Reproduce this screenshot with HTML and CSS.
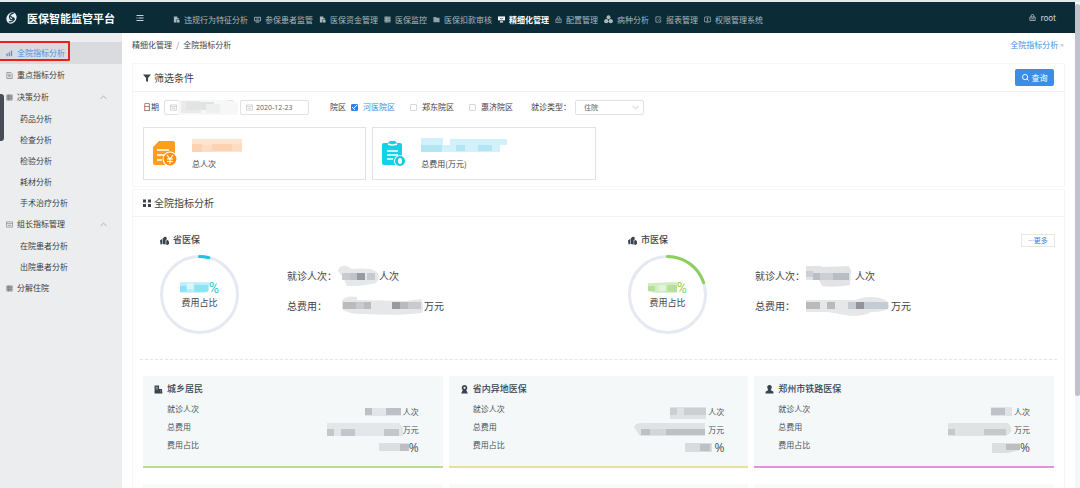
FILE: index.html
```html
<!DOCTYPE html>
<html lang="zh-CN">
<head>
<meta charset="utf-8">
<title>医保智能监管平台</title>
<link rel="stylesheet" href="styles.css">
</head>
<body>
<svg class="defs" aria-hidden="true">
  <symbol id="doc" viewBox="0 0 16 16"><path d="M2 1h8v4h4v3H8v7H2z"/><path d="M9 9h6v6H9z"/></symbol>
  <symbol id="monitor" viewBox="0 0 16 16"><path fill="none" stroke="currentColor" stroke-width="2" d="M1 3h14v8H1zM4 14h8M5 7h6"/></symbol>
  <symbol id="table" viewBox="0 0 16 16"><path d="M1 1h14v14H1z" opacity=".65"/><path fill="none" stroke="currentColor" stroke-width="1.5" d="M1 5h14M1 10h14M6 1v14"/></symbol>
  <symbol id="folder" viewBox="0 0 16 16"><path d="M1 2h6l2 2h6v10H1z" opacity=".85"/></symbol>
  <symbol id="heart" viewBox="0 0 16 16"><path d="M0 1h16v9H0z"/><path d="M5 12h6l1 3H4z"/><path d="M4 5l3 2 5-2" fill="none" stroke="#0b2b36" stroke-width="1.5"/></symbol>
  <symbol id="lock" viewBox="0 0 16 16"><path fill="none" stroke="currentColor" stroke-width="1.6" d="M2 7h12v8H2zM5 7V4a3 3 0 0 1 6 0v3M5 11h6"/></symbol>
  <symbol id="cubes" viewBox="0 0 16 16"><circle cx="8" cy="4" r="3.5"/><circle cx="4" cy="11" r="3.8"/><circle cx="12" cy="11" r="3.8"/></symbol>
  <symbol id="edit" viewBox="0 0 16 16"><path fill="none" stroke="currentColor" stroke-width="1.6" d="M13 8v6H2V2h11M6 8l2 2 6-7"/></symbol>
  <symbol id="badge" viewBox="0 0 16 16"><path fill="none" stroke="currentColor" stroke-width="1.6" d="M1 3q7-3 14 0v10q-7 3-14 0zM8 4v7M5 12h6M6 6h4"/></symbol>
  <symbol id="bars" viewBox="0 0 16 16"><path d="M1 8h3v6H1zM6 5h3v9H6zM11 1h3v13h-3z"/></symbol>
  <symbol id="note" viewBox="0 0 16 16"><path fill="none" stroke="currentColor" stroke-width="1.6" d="M2 1h9l3 3v11H2zM5 5h5M5 8h6M5 11h6"/></symbol>
  <symbol id="calendar" viewBox="0 0 16 16"><path fill="none" stroke="currentColor" stroke-width="1.4" d="M1 2h14v12H1zM1 6h14M4 10h8"/></symbol>
  <symbol id="up" viewBox="0 0 16 16"><path fill="none" stroke="currentColor" stroke-width="1.8" d="M1 11l7-6 7 6"/></symbol>
  <symbol id="down" viewBox="0 0 16 16"><path fill="none" stroke="currentColor" stroke-width="1.8" d="M1 5l7 6 7-6"/></symbol>
  <symbol id="hands" viewBox="0 0 16 16"><path d="M0 8l4-3v9l-3 1zM5 4l4-3 3 2v3l-2 1v8l-5-1z"/><path d="M11 8l3-1 2 3v4l-3 2-2-1z"/></symbol>
  <symbol id="building" viewBox="0 0 16 16"><path d="M1 1h8v6h5l1 8H1z"/><path d="M11 10h1M11 12h1M3 4h4M3 7h4" stroke="#f4f8f9"/></symbol>
  <symbol id="seal" viewBox="0 0 16 16"><path fill-rule="evenodd" d="M8 0a5 5 0 0 1 3 9l3 6H2l3-6A5 5 0 0 1 8 0zM8 3a2 2 0 1 0 0 4 2 2 0 0 0 0-4z"/></symbol>
  <symbol id="person" viewBox="0 0 16 16"><path d="M8 0c3 0 4 2 4 4s-1 4-2 5l5 3v3H1v-3l5-3C5 8 4 6 4 4s1-4 4-4z"/></symbol>
</svg>

<div class="app">
  <header class="topbar">
    <div class="brand">
      <svg class="logo" viewBox="0 0 24 24"><ellipse cx="12" cy="12" rx="9" ry="11" transform="rotate(28 12 12)" fill="#e9f0f2"/><path d="M16 3C9 4 7 9 9 13s6 2 7-2M7 19c5 1 9-2 11-6M10 8l6 6" fill="none" stroke="#0b2b36" stroke-width="2"/></svg>
      <h1 class="brand-name">医保智能监管平台</h1>
    </div>
    <button class="fold" aria-label="折叠菜单"><svg viewBox="0 0 16 16"><path d="M1 3h14M5 8h10M1 13h14M1 8h2" stroke="currentColor" stroke-width="2"/></svg></button>
    <nav class="topnav">
      <a class="topnav-item" href="#"><svg class="ico"><use href="#doc"/></svg>违规行为特征分析</a>
      <a class="topnav-item" href="#"><svg class="ico"><use href="#monitor"/></svg>参保患者监管</a>
      <a class="topnav-item" href="#"><svg class="ico"><use href="#doc"/></svg>医保资金管理</a>
      <a class="topnav-item" href="#"><svg class="ico"><use href="#table"/></svg>医保监控</a>
      <a class="topnav-item" href="#"><svg class="ico"><use href="#folder"/></svg>医保扣款审核</a>
      <a class="topnav-item is-active" href="#"><svg class="ico"><use href="#heart"/></svg>精细化管理</a>
      <a class="topnav-item" href="#"><svg class="ico"><use href="#lock"/></svg>配置管理</a>
      <a class="topnav-item" href="#"><svg class="ico ico-wide"><use href="#cubes"/></svg>病种分析</a>
      <a class="topnav-item" href="#"><svg class="ico"><use href="#edit"/></svg>报表管理</a>
      <a class="topnav-item" href="#"><svg class="ico"><use href="#badge"/></svg>权限管理系统</a>
    </nav>
    <button class="user"><svg class="ico"><use href="#lock"/></svg>root</button>
  </header>

  <aside class="sidebar">
    <nav class="menu">
      <a class="menu-item is-active" href="#"><svg class="ico"><use href="#bars"/></svg>全院指标分析</a>
      <a class="menu-item" href="#"><svg class="ico"><use href="#note"/></svg>重点指标分析</a>
      <a class="menu-item" href="#"><svg class="ico"><use href="#table"/></svg>决策分析<svg class="ico menu-arrow"><use href="#up"/></svg></a>
      <a class="menu-sub" href="#">药品分析</a>
      <a class="menu-sub" href="#">检查分析</a>
      <a class="menu-sub" href="#">检验分析</a>
      <a class="menu-sub" href="#">耗材分析</a>
      <a class="menu-sub" href="#">手术治疗分析</a>
      <a class="menu-item" href="#"><svg class="ico"><use href="#calendar"/></svg>组长指标管理<svg class="ico menu-arrow"><use href="#up"/></svg></a>
      <a class="menu-sub" href="#">在院患者分析</a>
      <a class="menu-sub" href="#">出院患者分析</a>
      <a class="menu-item" href="#"><svg class="ico"><use href="#table"/></svg>分解住院</a>
    </nav>
    <div class="highlight"></div>
    <div class="drawer-tab"></div>
  </aside>

  <main class="main">
    <div class="crumbs">
      <span>精细化管理</span><span class="crumb-sep">/</span><span>全院指标分析</span>
      <a class="page-tab" href="#">全院指标分析 <span class="tab-close">×</span></a>
    </div>

    <section class="panel">
      <div class="panel-head">
        <svg class="head-ico" viewBox="0 0 16 16"><path d="M0 1h16l-6 7v8l-4-2V8z"/></svg>
        <h2 class="panel-title">筛选条件</h2>
        <button class="query"><svg class="ico" viewBox="0 0 16 16"><path d="M7 1a6 6 0 1 0 0 12A6 6 0 0 0 7 1zM11 11l4 4" fill="none" stroke="currentColor" stroke-width="2"/></svg>查询</button>
      </div>
      <div class="filter-body">
        <form class="filters">
          <label for="from">日期</label>
          <span class="date-box date-from"><svg class="ico field-ico"><use href="#calendar"/></svg><input class="date" id="from" type="text" value="">
            <svg class="mosaic date-mask" viewBox="0 0 60 18"><path fill="#f7f7f7" d="M0 2h48l12 3v12H0z"/><path fill="#e9eaea" d="M3 3h20v12H3z"/><path fill="#e2e4e4" d="M8 4h28v8H8z"/><path fill="#eeefef" d="M28 6h14v9H28z"/></svg>
          </span>
          <span class="dash">-</span>
          <span class="date-box"><svg class="ico field-ico"><use href="#calendar"/></svg><input class="date" type="text" value="2020-12-23" aria-label="结束日期"></span>
          <span class="filter-label">院区</span>
          <label class="check is-on"><input type="checkbox" checked>河医院区</label>
          <label class="check"><input type="checkbox">郑东院区</label>
          <label class="check"><input type="checkbox">惠济院区</label>
          <label class="type-label" for="type">就诊类型：</label>
          <span class="select-box"><select class="select" id="type"><option>住院</option></select><svg class="ico select-arrow"><use href="#down"/></svg></span>
        </form>
        <div class="stats">
          <div class="stat">
            <svg class="stat-ico" viewBox="0 0 24 26"><path fill="#ff9d1c" d="M6 0h14a2 2 0 0 1 2 2v22H2a2 2 0 0 1-2-2V6z"/><path d="M4 9h12M4 14h8M4 19h5" stroke="#fff" stroke-width="1.4"/><circle cx="17" cy="18" r="7.5" fill="#fff"/><circle cx="17" cy="18" r="6.4" fill="#ff8f10"/><path d="M14 14l3 4 3-4M17 18v5M14 18h6M14 20.500h6" fill="none" stroke="#fff" stroke-width="1.200"/></svg>
            <div class="stat-text">
              <svg class="mosaic stat-mask" viewBox="0 0 90 14"><path fill="#fde5d2" d="M0 1h50v13H0z"/><path fill="#fbd3b2" d="M0 6h10v8H0zM20 6h20v7H20z"/><path fill="#fddcc2" d="M10 7h10v7H10zM40 6h10v7H40z"/></svg>
              <span>总人次</span>
            </div>
          </div>
          <div class="stat">
            <svg class="stat-ico" viewBox="0 0 24 26"><path fill="#13d2e3" d="M2 2h4l2-2h5l2 2h3a2 2 0 0 1 2 2v20H2a2 2 0 0 1-2-2V4a2 2 0 0 1 2-2z"/><path d="M6 3q4 2 9 0M5 10h11M5 14h11M5 18h6" fill="none" stroke="#fff" stroke-width="1.400"/><circle cx="18" cy="20" r="6" fill="#fff"/><circle cx="18" cy="20" r="5" fill="#13c8e3"/><ellipse cx="18" cy="20" rx="2" ry="3" fill="#fff"/></svg>
            <div class="stat-text">
              <svg class="mosaic stat-mask" viewBox="0 0 90 14"><path fill="#d3f1fb" d="M0 0h22v7h7V1h57v6h-7v7H0z"/><path fill="#b4e5f5" d="M0 7h21v7H0zM35 7h9v6h-9zM57 7h14v6H57z"/></svg>
              <span>总费用(万元)</span>
            </div>
          </div>
        </div>
      </div>
    </section>

    <section class="panel panel-grow">
      <div class="panel-head panel-head-low">
        <svg class="head-ico" viewBox="0 0 16 16"><path d="M0 1h6v6H0zM10 1h6v6h-6zM0 10h6v6H0zM10 10h6v6h-6z"/></svg>
        <h2 class="panel-title">全院指标分析</h2>
      </div>
      <div class="overview">
        <article class="insurer">
          <h3 class="sub-title"><svg class="ico ico-wide"><use href="#hands"/></svg>省医保</h3>
          <div class="insurer-row">
            <div class="ring">
              <svg class="ring-chart" viewBox="0 0 79 79"><circle class="ring-track" cx="39.500" cy="39.500" r="38"/><circle class="ring-value ring-cyan" cx="39.500" cy="39.500" r="38" pathLength="100" stroke-dasharray="4 96" transform="rotate(-90 39.5 39.5)"/></svg>
              <div class="ring-text">
                <div class="ring-number cyan"><svg class="mosaic ring-mask" viewBox="0 0 30 12"><path fill="#b9effa" d="M0 0h30v8l-4 3H0z"/><path fill="#8be3f4" d="M0 4h7v6H0zM15 3h14v7H15z"/><path fill="#dcf6fb" d="M7 1h7v6H7z"/></svg>%</div>
                <div class="ring-label">费用占比</div>
              </div>
            </div>
            <dl class="figures">
              <div class="figure"><dt>就诊人次：</dt><dd><svg class="mosaic" width="41" height="22" viewBox="0 0 41 22"><path fill="#e6e7e8" d="M0 6q1-6 9-5l5 3q10-1 18 0 9 3 9 7-1 8-7 8l-14 2H9l-3-7z"/><path fill="#c8cad0" d="M4 8h8v7H4zM29 8h8v7h-8z"/><path fill="#989aa1" d="M19 8h8v7h-8z"/><path fill="#bfc3ca" d="M12 8h7v7h-7z"/></svg>人次</dd></div>
              <div class="figure"><dt>总费用：</dt><dd><svg class="mosaic mask-inset" width="82" height="20" viewBox="0 0 82 20"><path fill="#e6e7e8" d="M0 5q3-6 15-4v3l50 1 14-2q4 8 1 14-24 3-60 1-14 0-20-5z"/><path fill="#babbbd" d="M1 6h13v7H1zM22 6h7v7h-7zM58 6h8v7h-8z"/><path fill="#989a9e" d="M50 6h8v7h-8z"/><path fill="#c8cacf" d="M14 6h8v7h-8zM66 6h13v7H66z"/></svg>万元</dd></div>
            </dl>
          </div>
        </article>
        <article class="insurer">
          <h3 class="sub-title"><svg class="ico ico-wide"><use href="#hands"/></svg>市医保</h3>
          <div class="insurer-row">
            <div class="ring">
              <svg class="ring-chart" viewBox="0 0 79 79"><circle class="ring-track" cx="39.500" cy="39.500" r="38"/><circle class="ring-value ring-green" cx="39.500" cy="39.500" r="38" pathLength="100" stroke-dasharray="20 80" transform="rotate(-90 39.5 39.5)"/></svg>
              <div class="ring-text">
                <div class="ring-number green"><svg class="mosaic ring-mask" viewBox="0 0 30 12"><path fill="#d2ecc1" d="M0 1l22-1h8v11H6l-6-2z"/><path fill="#b5df9b" d="M0 4h7v5H0zM20 3h10v7H20z"/><path fill="#e5f3dd" d="M11 3h7v6h-7z"/></svg>%</div>
                <div class="ring-label">费用占比</div>
              </div>
            </div>
            <dl class="figures">
              <div class="figure"><dt>就诊人次：</dt><dd><svg class="mosaic" width="49" height="22" viewBox="0 0 49 22"><path fill="#e2e3e5" d="M0 1h14l3 1 26-1 2 5-1 14q-15 3-28 1l-3-6H0z"/><path fill="#b9bdc6" d="M7 8h7v7H7zM27 8h16v7H27z"/><path fill="#cdd0d3" d="M0 6h7v6H0zM14 8h13v7H14z"/></svg>人次</dd></div>
              <div class="figure"><dt>总费用：</dt><dd><svg class="mosaic" width="85" height="20" viewBox="0 0 85 20"><path fill="#e6e7e9" d="M0 4h50Q60-1 74 2q10 2 9 10-3 4-18 4-5 4-20 4l-23-4H0z"/><path fill="#b9babb" d="M0 6h14v7H0zM21 6h8v7h-8z"/><path fill="#92949a" d="M50 6h8v7h-8z"/><path fill="#c4cbd5" d="M42 6h8v7h-8zM58 6h24v7H58z"/></svg>万元</dd></div>
            </dl>
          </div>
          <button class="more">···更多</button>
        </article>
      </div>

      <div class="cards">
        <article class="card card-green">
          <h3 class="sub-title"><svg class="ico ico-wide"><use href="#building"/></svg>城乡居民</h3>
          <div class="card-cols">
            <div class="card-labels"><span>就诊人次</span><span>总费用</span><span>费用占比</span></div>
            <div class="card-values">
              <span><svg class="mosaic" width="38" height="14" viewBox="0 0 38 14"><path fill="#e3e6e9" d="M0 3h36v8H0z"/><path fill="#bdc0c6" d="M0 3h7v7H0zM21 3h15v7H21z"/></svg>人次</span>
              <span><svg class="mosaic" width="76" height="16" viewBox="0 0 76 16"><path fill="#e4e7e9" d="M0 1h72l4 5v8H0z"/><path fill="#c3c6ca" d="M0 7h7v7H0zM14 7h14v7H14zM57 7h15v7H57z"/></svg>万元</span>
              <span class="percent"><svg class="mosaic" width="30" height="14" viewBox="0 0 30 14"><path fill="#dcdee1" d="M0 2h30v8H0z"/><path fill="#bdbfc3" d="M21 3h9v7h-9z"/></svg>%</span>
            </div>
          </div>
        </article>
        <article class="card card-yellow">
          <h3 class="sub-title"><svg class="ico ico-wide"><use href="#seal"/></svg>省内异地医保</h3>
          <div class="card-cols">
            <div class="card-labels"><span>就诊人次</span><span>总费用</span><span>费用占比</span></div>
            <div class="card-values">
              <span><svg class="mosaic" width="38" height="14" viewBox="0 0 38 14"><path fill="#dfe2e4" d="M0 2h36v12H0z"/><path fill="#cbcfd2" d="M0 3h7v7H0zM14 3h22v7H14z"/></svg>人次</span>
              <span><svg class="mosaic" width="74" height="16" viewBox="0 0 74 16"><path fill="#e0e3e5" d="M0 5q1-4 8-4h63v13H6z"/><path fill="#bec1c4" d="M7 7h64v6H7z"/><path fill="#d3d6d8" d="M16 7h16v6H16z"/></svg>万元</span>
              <span class="percent"><svg class="mosaic" width="30" height="14" viewBox="0 0 30 14"><path fill="#d9dcde" d="M1 2h27v9H1z"/><path fill="#bec1c4" d="M16 3h10v7H16z"/></svg>%</span>
            </div>
          </div>
        </article>
        <article class="card card-purple">
          <h3 class="sub-title"><svg class="ico ico-wide"><use href="#person"/></svg>郑州市铁路医保</h3>
          <div class="card-cols">
            <div class="card-labels"><span>就诊人次</span><span>总费用</span><span>费用占比</span></div>
            <div class="card-values">
              <span><svg class="mosaic" width="23" height="14" viewBox="0 0 23 14"><path fill="#e1e3e6" d="M0 2h21v9H0z"/><path fill="#bfc2c8" d="M0 3h14v7H0z"/></svg>人次</span>
              <span><svg class="mosaic" width="66" height="16" viewBox="0 0 66 16"><path fill="#e0e3e4" d="M0 1h60q4 4 3 9l-5 4H0z"/><path fill="#c6c9ca" d="M0 7h7v6H0zM36 7h22v6H36z"/></svg>万元</span>
              <span class="percent"><svg class="mosaic" width="28" height="14" viewBox="0 0 28 14"><path fill="#dcdfe0" d="M0 2h28v7l-12 3H0z"/><path fill="#bcbebf" d="M14 3h14v6H14z"/></svg>%</span>
            </div>
          </div>
        </article>
        <article class="card card-next"></article>
        <article class="card card-next"></article>
        <article class="card card-next"></article>
      </div>
    </section>
  </main>
  <div class="scroll-track"><div class="scroll-thumb"></div></div>
</div>
</body>
</html>
```
FILE: styles.css
```css
* { box-sizing: border-box; }
body {
  margin: 0;
  overflow: hidden;
  background: #fff;
  color: #3d4348;
  font: 8px/12px "Noto Sans CJK SC", sans-serif;
}
h1, h2, h3, dl, dd { margin: 0; font-weight: 400; }
a { color: inherit; text-decoration: none; }
button, input, select { margin: 0; padding: 0; border: 0; background: none; color: inherit; font: inherit; }
svg { flex: none; display: block; fill: currentColor; }
.defs { position: absolute; width: 0; height: 0; }
.ico { width: 7px; height: 7px; }
.ico-wide { width: 9px; height: 9px; }

.app {
  display: grid;
  grid-template: 31px minmax(0, 1fr) / 122px minmax(0, 1fr) 5px;
  height: 100vh;
  border-top: 2px solid #e2e9eb;
}

/* Header */
.topbar { grid-column: 1 / 3; display: flex; align-items: center; background: #0b2b36; color: #aab7bc; }
.brand { display: flex; align-items: center; gap: 9px; width: 136px; padding-left: 5px; }
.logo { width: 13px; height: 14px; }
.brand-name { color: #fff; font-size: 11px; line-height: 16px; font-weight: 700; white-space: nowrap; }
.fold { width: 8px; height: 8px; color: #c9d3d6; }
.topnav { display: flex; gap: 6px; margin-left: 29px; padding-top: 4px; white-space: nowrap; }
.topnav-item { display: flex; align-items: center; gap: 4px; }
.topnav-item.is-active { color: #fff; font-weight: 700; }
.user { display: flex; align-items: center; gap: 4px; margin-left: auto; padding-right: 19px; color: #d3dbde; font-size: 8px; }

/* Sidebar */
.sidebar { position: relative; padding-top: 9px; background: #ebedef; }
.menu { display: flex; flex-direction: column; }
.menu-item { display: flex; align-items: center; gap: 4px; height: 22px; padding: 0 15px 0 6px; color: #3a3d40; }
.menu-item .ico { color: #777b80; }
.menu-item.is-active, .menu-item.is-active .ico { color: #4a94ea; }
.menu-item.is-active { background: #dadbdf; }
.menu-item .menu-arrow { margin-left: auto; color: #a2a5a9; }
.menu-sub { height: 21px; padding-left: 20px; line-height: 21px; color: #3a3d40; }
.highlight { position: absolute; top: 8px; left: -2px; width: 72px; height: 20px; border: 2px solid #ea2019; border-radius: 1px; }
.drawer-tab { position: absolute; top: 61px; left: 0; width: 4px; height: 47px; border-radius: 0 3px 3px 0; background: #484c55; }

/* Content */
.main { display: flex; flex-direction: column; padding: 6px 10px 0; overflow: hidden; }
.crumbs { flex: none; display: flex; gap: 4px; height: 24px; }
.crumb-sep { color: #85898d; }
.page-tab { margin-left: auto; padding-right: 1px; color: #4593df; }
.tab-close { color: #a4b3c2; font-size: 7px; font-family: "Open Sans", sans-serif; }
.panel { flex: none; margin-bottom: 2px; border: 1px solid #f5f6f8; }
.panel-grow { flex: 1 0 auto; margin-bottom: 0; }
.panel-head { display: flex; align-items: center; gap: 3px; height: 28px; padding: 0 10px; border-bottom: 1px solid #f2f3f5; }
.panel-head-low { height: 27px; }
.head-ico { width: 8px; height: 8px; }
.panel-title { font-size: 10px; line-height: 14px; }
.query { display: flex; align-items: center; justify-content: center; gap: 3px; width: 39px; height: 17px; margin-left: auto; border-radius: 2px; background: #3a8ee6; color: #fff; }

.filter-body { padding: 7px 10px 6px; }
.filters { display: flex; align-items: center; height: 16px; white-space: nowrap; }
.date-box, .select-box { position: relative; display: flex; width: 69px; }
.date-from { margin-left: 5px; width: 70px; }
.dash { width: 6px; text-align: center; }
.date, .select { width: 100%; height: 15px; border: 1px solid #dfe1e4; border-radius: 2px; color: #606569; line-height: 13px; }
.date { padding-left: 15px; font-family: "Open Sans", "Noto Sans CJK SC", sans-serif; font-size: 7px; }
.select { padding-left: 8px; appearance: none; font-size: 7px; }
.field-ico { position: absolute; top: 4px; left: 6px; color: #b9bcc0; }
.select-arrow { position: absolute; top: 4px; right: 5px; color: #b9bcc0; }
.date-mask { position: absolute; top: -2px; left: 14px; width: 60px; height: 18px; }
.filter-label { margin-left: 21px; }
.check { display: flex; align-items: center; gap: 5px; margin-left: 15px; }
.filter-label + .check { margin-left: 5px; }
.check input { width: 7px; height: 7px; border: 1px solid #d5d8dc; border-radius: 1px; appearance: none; background: #fff; }
.check input:checked {
  border-color: #2f86e0;
  background:
    linear-gradient(45deg, transparent 42%, #fff 42%, #fff 60%, transparent 60%) left bottom / 3px 3px no-repeat,
    linear-gradient(135deg, transparent 42%, #fff 42%, #fff 58%, transparent 58%) right center / 4px 4px no-repeat,
    #2f86e0;
}
.check.is-on { color: #3f8de2; }
.type-label { width: 44px; margin-left: 18px; }

.stats { display: grid; grid-template-columns: repeat(4, 1fr); gap: 6px; margin-top: 12px; }
.stat { display: flex; align-items: center; gap: 15px; height: 53px; padding-left: 9px; border: 1px solid #dfe4e8; }
.stat-ico { width: 24px; height: 26px; }
.stat-text { display: grid; gap: 6px; }
.stat-mask { width: 90px; height: 14px; }

.overview { position: relative; display: grid; grid-template-columns: 12fr 11fr; margin: 0 7px; padding: 16px 0 25px 20px; border-bottom: 1px dashed #e3e5e8; }
.sub-title { display: flex; align-items: center; gap: 4px; color: #37434f; font-size: 9px; line-height: 14px; font-weight: 500; }
.insurer-row { display: flex; gap: 48px; margin-top: 8px; }
.ring { display: grid; width: 79px; height: 79px; }
.ring > * { grid-area: 1 / 1; }
.ring-chart { width: 79px; height: 79px; overflow: visible; fill: none; stroke-width: 3; }
.ring-track { stroke: #e5e9f2; }
.ring-value { stroke-linecap: round; }
.ring-cyan { stroke: #20c3dc; }
.ring-green { stroke: #8ccf5c; }
.ring-text { align-self: center; }
.ring-number { display: flex; align-items: center; justify-content: center; font: 14px/16px Roboto, sans-serif; }
.ring-mask { width: 29px; height: 12px; }
.cyan { color: #25c4dc; }
.green { color: #8bcf5d; }
.ring-label { text-align: center; font-size: 9px; line-height: 13px; }
.figures { display: grid; align-content: start; gap: 8px; padding-top: 10px; font-size: 10px; line-height: 22px; }
.figure { display: flex; }
.figure dt { width: 51px; }
.figure dd { display: flex; align-items: center; }
.mask-inset { margin-left: 4px; }
.more { position: absolute; top: 17px; right: 2px; width: 34px; height: 13px; border: 1px solid #e9e6df; color: #3b7fe0; font: 7px/11px "Open Sans", "Noto Sans CJK SC", sans-serif; white-space: nowrap; }

.cards { display: grid; grid-template-columns: repeat(3, 1fr); gap: 16px 6px; padding: 16px 10px 0; }
.card { height: 92px; padding: 6px 24px 0 11px; border-bottom: 2px solid; background: #f4f8f9; }
.card-green { border-color: #b8dd95; }
.card-yellow { border-color: #eedb9e; }
.card-purple { border-color: #d996df; }
.card-next { border-color: transparent; background: #f8f9fb; }
.card-cols { display: flex; justify-content: space-between; padding: 4px 0 0 13px; color: #4a525a; }
.card-labels, .card-values { display: grid; grid-auto-rows: 18px; line-height: 18px; }
.card-values { padding-top: 3px; }
.card-values span { display: flex; align-items: center; justify-content: flex-end; }
.card-values .percent { font: 12px/18px "Open Sans", sans-serif; }

.scroll-track { grid-area: 1 / 3 / 3 / 4; padding-top: 2px; background: #f6f7f8; }
.scroll-thumb { height: 81%; border-radius: 3px; background: #c0c3cc; }
```
